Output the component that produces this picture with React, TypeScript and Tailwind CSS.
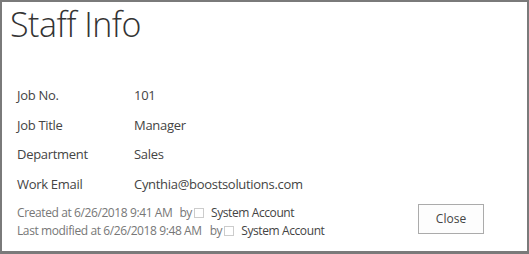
export default function App() {
  const rows = [
    ["Job No.", "101"],
    ["Job Title", "Manager"],
    ["Department", "Sales"],
    ["Work Email", "Cynthia@boostsolutions.com"],
  ];

  return (
    <div className="w-[529px] h-[254px] border-2 border-b-[3px] border-[#7a7a7a] bg-white text-[#444] font-['Open_Sans',sans-serif] overflow-hidden">
      <h1 className="pl-[8px] pt-[0px] text-[34px] leading-[44px] font-light text-[#333] tracking-[-0.5px]">Staff Info</h1>
      <div className="pl-[15px] pt-[35px] flex flex-col">
        {rows.map(([label, value]) => (
          <div key={label} className="flex h-[29.5px] items-center text-[13px] tracking-[-0.3px]">
            <div className="w-[117px]">{label}</div>
            <div>{value}</div>
          </div>
        ))}
      </div>
      <div className="flex items-start justify-between pl-[15px] pr-[43px] pt-[5px]">
        <div className="text-[12px] leading-[18px] text-[#777] tracking-[-0.4px]">
          <div className="flex items-center">
            Created at 6/26/2018 9:41 AM <span className="ml-[7px]">by</span>
            <span className="ml-[2px] inline-block w-[10px] h-[10px] border border-[#ccc]" />
            <span className="ml-[7px] text-[#444]">System Account</span>
          </div>
          <div className="flex items-center">
            Last modified at 6/26/2018 9:48 AM <span className="ml-[8px]">by</span>
            <span className="ml-[2px] inline-block w-[10px] h-[10px] border border-[#ccc]" />
            <span className="ml-[7px] text-[#444]">System Account</span>
          </div>
        </div>
        <button className="mt-[0px] w-[66px] h-[30px] border border-[#ababab] bg-[#fdfdfd] text-[12px] text-[#444]">Close</button>
      </div>
    </div>
  );
}
